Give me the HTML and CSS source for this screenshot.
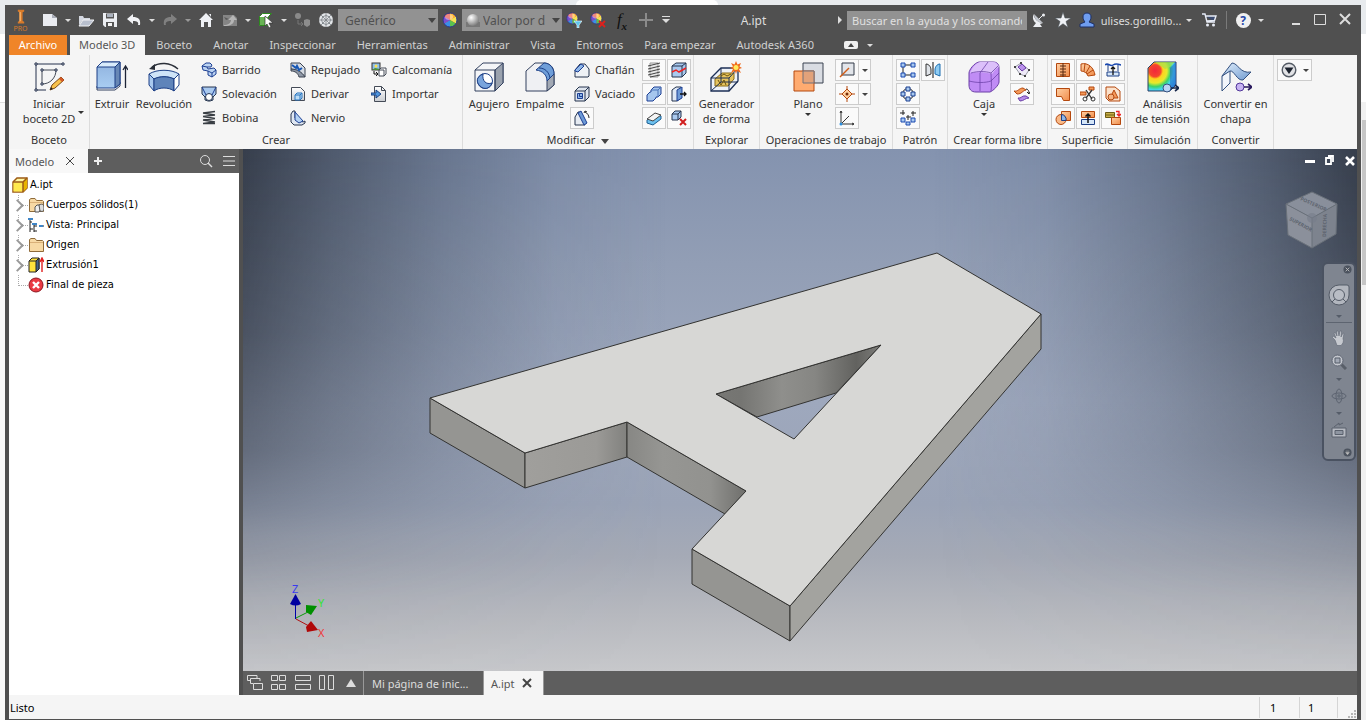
FILE: index.html
```html
<!DOCTYPE html>
<html lang="es">
<head>
<meta charset="utf-8">
<title>A.ipt</title>
<link rel="stylesheet" href="styles.css">
</head>
<body>
<svg class="defs" aria-hidden="true">
  <defs>
    <linearGradient id="gBlue" x1="0" y1="0" x2="1" y2="1"><stop offset="0" stop-color="#e2f0fc"/><stop offset="1" stop-color="#6f9ad0"/></linearGradient>
    <linearGradient id="gBlueV" x1="0" y1="0" x2="0" y2="1"><stop offset="0" stop-color="#8fb2de"/><stop offset="1" stop-color="#a9cdf2"/></linearGradient>
    <linearGradient id="gGrey" x1="0" y1="0" x2="0" y2="1"><stop offset="0" stop-color="#fff"/><stop offset="1" stop-color="#c9ccd1"/></linearGradient>
    <linearGradient id="gOr" x1="0" y1="0" x2="1" y2="1"><stop offset="0" stop-color="#ffd0a4"/><stop offset="1" stop-color="#f08c4a"/></linearGradient>
    <radialGradient id="gBall" cx=".35" cy=".3" r=".8"><stop offset="0" stop-color="#fff"/><stop offset="1" stop-color="#6d6d6d"/></radialGradient>
    <radialGradient id="gHeat" cx=".25" cy=".3" r=".95"><stop offset="0" stop-color="#f2283c"/><stop offset=".22" stop-color="#f5452d"/><stop offset=".3" stop-color="#ffd21f"/><stop offset=".45" stop-color="#e6ea2c"/><stop offset=".58" stop-color="#3cd36a"/><stop offset=".7" stop-color="#41d8f0"/><stop offset="1" stop-color="#2f86f0"/></radialGradient>
    <linearGradient id="gF2"><stop offset="0" stop-color="#a09f9c"/><stop offset=".7" stop-color="#9b9a97"/><stop offset="1" stop-color="#81817e"/></linearGradient>
    <linearGradient id="gF3"><stop offset="0" stop-color="#878784"/><stop offset=".3" stop-color="#969693"/><stop offset=".7" stop-color="#92928f"/><stop offset="1" stop-color="#6f6f6c"/></linearGradient>
    <linearGradient id="gHole"><stop offset="0" stop-color="#777774"/><stop offset=".15" stop-color="#757572"/><stop offset=".4" stop-color="#8f8f8c"/><stop offset=".6" stop-color="#868683"/><stop offset=".85" stop-color="#62625f"/><stop offset="1" stop-color="#7d7d7a"/></linearGradient>
    <g id="wheel"><circle cx="8" cy="8" r="7" fill="#e33a2e"/><path d="M8 8V1a7 7 0 0 1 6 3.500z" fill="#ffb42e"/><path d="M8 8l6-3.500a7 7 0 0 1 0 7z" fill="#f3e552"/><path d="M8 8l6 3.500A7 7 0 0 1 8 15z" fill="#5cc24e"/><path d="M8 8v7a7 7 0 0 1-6-3.500z" fill="#3b8ee6"/><path d="M8 8l-6 3.500a7 7 0 0 1 0-7z" fill="#7a4fd0"/><circle cx="8" cy="8" r="7" fill="none" stroke="#223a8c"/><ellipse cx="7" cy="5" rx="4" ry="3" fill="#fff" opacity=".4"/></g>
    <g id="folder"><path d="M1.500 14.500v-12l1.500-1h4l1.500 2h6l1 1v10z" fill="#f7d9a4" stroke="#8f6b3a"/><path d="M2 5.500h13" stroke="#d9b078"/></g>
  </defs>
</svg>

<div class="backdrop-top"><span class="backdrop-tab"></span></div>
<div class="desk">
<div class="backdrop-left"></div>
<div class="app">

<header class="titlebar">
  <button class="logo" aria-label="Inventor"><svg viewBox="0 0 14 20"><path d="M3 1h8v2l-2 1v11l2 1v2H3v-2l2-1V4L3 3z" fill="#d87a2a"/><path d="M5 3l2 1v11l-2 1z" fill="#f6ad62"/></svg><span class="logo-text">PRO</span></button>
  <button class="tb" aria-label="Nuevo"><svg viewBox="0 0 16 16"><path d="M1 2h9l5 4v8H1z" fill="#e9ebf0"/><path d="M10 2v4h5z" fill="#a9adb8"/></svg></button>
  <button class="tb-arrow" aria-label="Opciones de nuevo"></button>
  <button class="tb" aria-label="Abrir"><svg viewBox="0 0 16 16"><path d="M1 13V4h4l1 2h6v2H5z" fill="#d3d7e0"/><path d="M1 14l4-6h11l-5 6z" fill="#b8bfcd" stroke="#f1f2f5"/></svg></button>
  <button class="tb" aria-label="Guardar"><svg viewBox="0 0 16 16"><path d="M1 1h14v14H3l-2-2z" fill="#eceef2"/><path d="M4 1.500h8v5H4zM4 10h8v5H4z" fill="#555"/><path d="M5 2h6v3H5z" fill="#aab1bd"/><path d="M6 11h4v3H6z" fill="#f5f5f5"/></svg></button>
  <button class="tb" aria-label="Deshacer"><svg viewBox="0 0 16 16"><path d="M1 7l6-5v3c5 0 8 2 7 8h-2c1-3-1-4-5-4v3z" fill="#f1f2f5"/></svg></button>
  <button class="tb-arrow" aria-label="Lista de deshacer"></button>
  <button class="tb" aria-label="Rehacer"><svg viewBox="0 0 16 16"><path d="M15 7L9 2v3C4 5 1 7 2 13h2c-1-3 1-4 5-4v3z" fill="#808080"/></svg></button>
  <button class="tb-arrow dim" aria-label="Lista de rehacer"></button>
  <button class="tb" aria-label="Inicio"><svg viewBox="0 0 16 16"><path d="M8 1l7 7h-2v7h-3v-5H6v5H3V8H1z" fill="#eef0f4"/><path d="M11 2h2v3z" fill="#eef0f4"/></svg></button>
  <button class="tb" aria-label="Actualizar"><svg viewBox="0 0 16 16"><path d="M1 3h11l3 3v8H1z" fill="#858585"/><path d="M2 13c4 0 7-2 7-5H6l5-5 4 5h-3c0 4-4 6-10 6z" fill="#b5b5b5"/><path d="M2 5l5 2-3 1z" fill="#5a5a5a"/></svg></button>
  <button class="tb-arrow" aria-label="Opciones de actualizar"></button>
  <button class="tb" aria-label="Seleccionar"><svg viewBox="0 0 16 16"><path d="M1.500 4.500l3-3h9l-3 3v9h-9z" fill="#fff" stroke="#2d8a1e"/><path d="M2 5h8v8H2z" fill="#69b355"/><path d="M7 4l8 7h-4l2 4-2 1-2-4-2 2z" fill="#fff" stroke="#333" stroke-width=".7"/></svg></button>
  <button class="tb-arrow" aria-label="Filtro de selección"></button>
  <button class="tb" aria-label="Componente"><svg viewBox="0 0 16 16"><circle cx="4" cy="4" r="3" fill="#8a8a8a"/><path d="M10 8l3-1 3 1v5l-3 2-3-2z" fill="#8d8d8d"/><path d="M4 8v4h4M7 10l2 2-2 2" fill="none" stroke="#777"/></svg></button>
  <button class="tb" aria-label="Material"><svg viewBox="0 0 16 16"><circle cx="8" cy="8" r="7" fill="#e4e7ea"/><path d="M3 3l10 10M1 8h14M8 1v14M13 3L3 13M4 5q4-3 8 0M4 11q4 3 8 0M5 4q-3 4 0 8M11 4q3 4 0 8" stroke="#7b8186" stroke-width=".8" fill="none"/></svg></button>
  <div class="picker"><select aria-label="Material"><option>Genérico</option></select></div>
  <button class="tb" aria-label="Aspecto"><svg viewBox="0 0 16 16"><use href="#wheel"/></svg></button>
  <div class="picker with-ball"><svg class="ball" width="14" height="14" viewBox="0 0 14 14"><path d="M0 9h14v5H0z" fill="#777"/><circle cx="7" cy="7" r="6" fill="url(#gBall)"/></svg><select aria-label="Aspecto"><option>Valor por d</option></select></div>
  <button class="tb" aria-label="Ajustar"><svg viewBox="0 0 16 16"><g transform="scale(.8)"><use href="#wheel"/></g><path d="M8 9h8l-3 4v3h-2v-3z" fill="#5dc6ee" stroke="#fff" stroke-width=".6"/></svg></button>
  <button class="tb" aria-label="Borrar"><svg viewBox="0 0 16 16"><g transform="scale(.8)"><use href="#wheel"/></g><path d="M9 9l6 6M15 9l-6 6" stroke="#e0201c" stroke-width="1.800"/></svg></button>
  <button class="tb fx" aria-label="Parámetros">f<sub>x</sub></button>
  <button class="tb" aria-label="Añadir"><svg viewBox="0 0 16 16"><path d="M7 1h2v6h6v2H9v6H7V9H1V7h6z" fill="#8b8b8b"/></svg></button>
  <button class="tb slim" aria-label="Personalizar"><svg viewBox="0 0 16 16"><path d="M4 4.500h8" stroke="#ddd"/><path d="M4 7h8l-4 4z" fill="#ddd"/></svg></button>
  <h1 class="doc-title">A.ipt</h1>
  <button class="tb-right" aria-label="Ocultar búsqueda"></button>
  <input class="search" type="text" aria-label="Buscar" value="Buscar en la ayuda y los comandos">
  <button class="tb" aria-label="Comunicaciones"><svg viewBox="0 0 16 16"><path d="M3 2c0 5 3 8 9 9l-3 1 2 3H2l3-4C2 9 1 5 3 2z" fill="#eceef2"/><path d="M3 2l9 9c-5 0-9-4-9-9z" fill="#c3c7ce"/><path d="M8 7l4-4" stroke="#eceef2"/><circle cx="12.500" cy="3" r="1.500" fill="#eceef2"/></svg></button>
  <button class="tb" aria-label="Favoritos"><svg viewBox="0 0 16 16"><path d="M8 0l2 6h6l-5 3.500 2 6-5-3.700-5 3.700 2-6L0 6h6z" fill="#f0f2f6" stroke="#4a5058" stroke-width=".6"/></svg></button>
  <button class="tb" aria-label="Cuenta"><svg viewBox="0 0 16 16"><path d="M8 1c3 0 4 2 4 4s-1 4-2 5l5 2v3H1v-3l5-2C5 9 4 7 4 5s1-4 4-4z" fill="#6f9df0" stroke="#1c2f66"/></svg></button>
  <button class="user">ulises.gordillo...</button>
  <button class="tb-arrow" aria-label="Menú de usuario"></button>
  <button class="tb cart" aria-label="Tienda"><svg viewBox="0 0 16 16"><path d="M1 2h3l2 8h8M4.500 4H15l-1.500 4.500L6 9" fill="#3d4d72" stroke="#e8ecf5" stroke-width="1.400"/><circle cx="6.500" cy="13" r="1.500" fill="#e8ecf5"/><circle cx="12.500" cy="13" r="1.500" fill="#e8ecf5"/></svg></button>
  <span class="tb-sep"></span>
  <button class="tb help" aria-label="Ayuda"><span>?</span></button>
  <button class="tb-arrow" aria-label="Menú de ayuda"></button>
  <div class="window-buttons">
    <button class="tb" aria-label="Minimizar"><svg viewBox="0 0 16 16"><path d="M3 12h8" stroke="#ddd" stroke-width="2"/></svg></button>
    <button class="tb" aria-label="Maximizar"><svg viewBox="0 0 16 16"><path d="M1.500 2.500h11v10h-11z" fill="none" stroke="#ddd"/></svg></button>
    <button class="tb" aria-label="Cerrar"><svg viewBox="0 0 16 16"><path d="M3 2l10 10M13 2L3 12" stroke="#ddd" stroke-width="2"/></svg></button>
  </div>
</header>

<nav class="tabs">
  <button class="tab file">Archivo</button>
  <button class="tab active">Modelo 3D</button>
  <button class="tab">Boceto</button>
  <button class="tab">Anotar</button>
  <button class="tab">Inspeccionar</button>
  <button class="tab">Herramientas</button>
  <button class="tab">Administrar</button>
  <button class="tab">Vista</button>
  <button class="tab">Entornos</button>
  <button class="tab">Para empezar</button>
  <button class="tab">Autodesk A360</button>
  <button class="tb collapse" aria-label="Minimizar cinta"><svg viewBox="0 0 16 16"><rect x="1" y="4" width="14" height="8" rx="2" fill="#f0f0f0"/><path d="M5 10h6L8 6z" fill="#444"/></svg></button>
  <button class="tb-arrow" aria-label="Opciones de cinta"></button>
</nav>

<section class="ribbon">
  <div class="panel p-sketch">
    <div class="tools">
      <button class="big drop-side"><svg viewBox="0 0 32 32"><path d="M3 4v25h10M3 3h27" fill="none" stroke="#24304d"/><path d="M9 9h14M9 9v14M9 23C17 23 23 17 23 9" fill="none" stroke="#444b57"/><g fill="#fff" stroke="#24304d"><path d="M2 2h2v2H2zM29 2h2v2h-2zM2 28h2v2H2zM8 8h2v2H8zM22 8h2v2h-2zM8 22h2v2H8z"/></g><path d="M17 29l2-5 9-8 3 3-9 8z" fill="#f8c24c" stroke="#7b4a18"/><path d="M26 18l2-2 3 3-2 2z" fill="#d65a28"/><path d="M17 29l1-3 2 2z" fill="#222"/></svg><span>Iniciar<br>boceto 2D</span></button>
    </div>
    <div class="panel-name">Boceto</div>
  </div>

  <div class="panel p-create">
    <div class="tools">
      <button class="big w-36"><svg viewBox="0 0 32 32"><path d="M1 25v4h18l5-4v-4z" fill="#fff" stroke="#33415f"/><path d="M1 6l5-5h18v22l-5 4H1z" fill="url(#gBlueV)" stroke="#1c3f86"/><path d="M1 6l5-5h18l-5 5z" fill="#d8ebfb" stroke="#1c3f86"/><path d="M19 6l5-5v22l-5 4z" fill="#6787b5" stroke="#1c3f86"/><path d="M29.500 27V6M27 9l2.500-4L32 9" fill="none" stroke="#1d2436" stroke-width="1.300"/></svg><span>Extruir</span></button>
      <button class="big w-68"><svg viewBox="0 0 32 32"><path d="M4 6C11 1 22 1 30 8" fill="none" stroke="#2a2f38" stroke-width="1.400"/><path d="M1 8l6-5v6z" fill="#2a2f38"/><path d="M1 13l5 5v12l-5-6z" fill="#a9c9ef" stroke="#1c3f86"/><path d="M1 13C9 8 23 8 31 13l-5 5c-6-3-14-3-20 0z" fill="#cfe4f8" stroke="#1c3f86"/><path d="M6 18v12c5-4 15-4 20 0V18c-6-3-14-3-20 0z" fill="#5f84ba" stroke="#1c3f86"/><path d="M26 18l5-5v11l-5 6z" fill="#fff" stroke="#1c3f86"/></svg><span>Revolución</span></button>
      <div class="list col-a">
        <button class="cmd"><svg viewBox="0 0 16 16"><path d="M1 4l4-3h4l2 2-1 2-4 0 1 2 6-1 2 2v4l-4 3-4-2V9L2 8z" fill="#bcd4f2" stroke="#1d3f93"/><path d="M7 9l4 2v4M11 11l4-3M1 4l5 1" fill="none" stroke="#1d3f93"/></svg>Barrido</button>
        <button class="cmd"><svg viewBox="0 0 16 16"><path d="M1 1h14v7l-3 3v3l-3 1H7l-3-1v-3L1 8z" fill="#a9c9ef" stroke="#26354f"/><circle cx="8" cy="11" r="3.500" fill="#fff" stroke="#26354f"/><path d="M1 1l4 8M15 1l-4 8" stroke="#1d3f93"/></svg>Solevación</button>
        <button class="cmd"><svg viewBox="0 0 16 16"><path d="M2 3l12-1.500M2 3l12 2M2 6.500L14 5M2 6.500l12 2M2 10l12-1.500M2 10l12 2M2 13.500L14 12M2 13.500h12" fill="none" stroke="#393e44" stroke-width="1.400"/></svg>Bobina</button>
      </div>
      <div class="list col-b">
        <button class="cmd"><svg viewBox="0 0 16 16"><path d="M1 1h9l5 5v9c-3-4-8-7-14-8z" fill="#d6dbe2" stroke="#3a4250"/><path d="M1 7c6 0 11 3 14 8H9C8 11 5 9 1 9z" fill="#8f98a6" stroke="#3a4250"/><path d="M2 3l4 3 1-2 2 4 3-2" fill="none" stroke="#1757b5" stroke-width="2"/></svg>Repujado</button>
        <button class="cmd"><svg viewBox="0 0 16 16"><path d="M1.500 14.500v-13h9l4 4v9z" fill="url(#gGrey)" stroke="#444b57"/><path d="M5 9l2-2h5v5l-2 2H5z" fill="#bcdcf6" stroke="#2a76c0"/><path d="M5 9h5v5M10 9l2-2" fill="none" stroke="#2a76c0"/></svg>Derivar</button>
        <button class="cmd"><svg viewBox="0 0 16 16"><path d="M1 4l2-3h2v7l8 4 2-1v2l-3 2H4l-3-3z" fill="#dfe7f2" stroke="#26354f"/><path d="M5 2l8 9-4 2-4-3z" fill="#b3d2f4" stroke="#1d3f93"/></svg>Nervio</button>
      </div>
      <div class="list">
        <button class="cmd"><svg viewBox="0 0 16 16"><rect x="1" y="1" width="8" height="7" fill="#8fc1ea" stroke="#333"/><circle cx="5" cy="4" r="1.500" fill="#ffe14a"/><path d="M1 8l3-2 5 1v1z" fill="#4f8e3a"/><path d="M8 8l2-2h5v6l-2 2H8z" fill="#fff" stroke="#444b57"/><path d="M8 8h5v6" fill="none" stroke="#444b57"/><path d="M3 9v3h3M5 10l2 2-2 2" fill="none" stroke="#111"/></svg>Calcomanía</button>
        <button class="cmd"><svg viewBox="0 0 16 16"><path d="M3.500 15.500V.5h7l4 4v11z" fill="url(#gGrey)" stroke="#444b57"/><path d="M10.500.5v4h4" fill="none" stroke="#444b57"/><path d="M0 7h5V4l5 4-5 4V9H0z" fill="#4f95dc" stroke="#173f80"/></svg>Importar</button>
      </div>
    </div>
    <div class="panel-name">Crear</div>
  </div>

  <div class="panel p-modify">
    <div class="tools">
      <button class="big w-48"><svg viewBox="0 0 32 32"><path d="M2 9l8-7h20v20l-8 8H2z" fill="#f4f5f7" stroke="#33415f"/><path d="M22 9l8-7v20l-8 8z" fill="#9aa2ae" stroke="#33415f"/><path d="M2 9h20v21" fill="none" stroke="#33415f"/><circle cx="12" cy="20" r="7.500" fill="#fff" stroke="#1c3f86"/><path d="M10 13c-1 7 3 11 9 9-2 6-8 7-12 3s-4-9 3-12z" fill="#79a4dc" stroke="#1c3f86"/></svg><span>Agujero</span></button>
      <button class="big w-54"><svg viewBox="0 0 32 32"><path d="M2 10l9-8h10c6 1 9 5 9 11v11l-7 6H2z" fill="#eff0f3" stroke="#33415f"/><path d="M23 20l7-7v11l-7 6z" fill="#a2a9b4" stroke="#33415f"/><path d="M12 9l8-7c6 0 10 5 10 11l-7 7c0-6-4-10-11-11z" fill="#6f9ed8" stroke="#1c3f86"/><path d="M15 7c6 0 10 4 11 10" fill="none" stroke="#1c3f86"/></svg><span>Empalme</span></button>
      <div class="list col-d">
        <button class="cmd inset"><svg viewBox="0 0 16 16"><path d="M1 8l5-6h5l4 5v7l-1 1H1z" fill="#eef1f5" stroke="#26354f"/><path d="M1 8l6-6 3 2-6 6-3-1z" fill="#8fb7e8" stroke="#1d3f93"/></svg>Chaflán</button>
        <button class="cmd inset"><svg viewBox="0 0 16 16"><path d="M1 5l4-4h10v10l-4 4H1z" fill="#dfe5ee" stroke="#26354f"/><path d="M1 5h10v10M11 5l4-4" fill="none" stroke="#26354f"/><path d="M3.500 7.500h5v5h-5z" fill="#8fb7e8" stroke="#1d3f93"/><path d="M5.500 7.500v3h3" fill="none" stroke="#1d3f93"/></svg>Vaciado</button>
        <button class="sq" aria-label="Ángulo de desmoldeo"><svg viewBox="0 0 16 16"><path d="M1 7l3-5h3l4 13H1z" fill="#e6ebf2" stroke="#26354f"/><path d="M4 3l3-2 6 12-3 2z" fill="#6d9ad6" stroke="#1d3f93"/><path d="M11 2c2 1 4 3 4 6M10 3l1-2 2 1" fill="none" stroke="#222"/></svg></button>
      </div>
      <div class="grid g2">
        <button class="sq" aria-label="Rosca"><svg viewBox="0 0 16 16"><path d="M4 1h8v14H4z" fill="#e8e8e8" stroke="#999"/><path d="M2 4l12-3M2 7l12-3M2 10l12-3M2 13l12-3M4 15l10-2" stroke="#444"/></svg></button>
        <button class="sq" aria-label="Dividir"><svg viewBox="0 0 16 16"><path d="M1 4l4-3h10v10l-4 4H1z" fill="#a9c9ef" stroke="#26354f"/><path d="M1 4h10l4-3M11 4v11" fill="none" stroke="#26354f"/><path d="M1 10l4-2 3 2 7-4" fill="none" stroke="#e22" stroke-width="1.500"/></svg></button>
        <button class="sq" aria-label="Combinar"><svg viewBox="0 0 16 16"><path d="M5 4l3-3h7v7l-3 3h-2v1l-3 3H1V9l3-3h1z" fill="#a5c6ee" stroke="#1d3f93"/><path d="M5 4h7v7M12 4l3-3" fill="none" stroke="#4a74b8"/></svg></button>
        <button class="sq" aria-label="Mover cara"><svg viewBox="0 0 16 16"><path d="M1 4l4-3h5v11l-4 3H1z" fill="#dfe9f5" stroke="#26354f"/><path d="M6 4l5-3v11l-5 3z" fill="#6d9ad6" stroke="#1d3f93"/><path d="M9 8h6M13 6l2 2-2 2" fill="none" stroke="#111" stroke-width="1.300"/></svg></button>
        <button class="sq" aria-label="Engrosar"><svg viewBox="0 0 16 16"><path d="M1 10l8-6 6 2v3l-8 6-6-2z" fill="#6cc0ee" stroke="#1d5f93"/><path d="M1 9l8-6 6 2-8 6z" fill="#f5f5f5" stroke="#444"/></svg></button>
        <button class="sq" aria-label="Suprimir cara"><svg viewBox="0 0 16 16"><path d="M1 4l3-3h6v6l-3 3H1z" fill="#a9c9ef" stroke="#26354f"/><path d="M1 4h6v6M7 4l3-3" fill="none" stroke="#26354f"/><path d="M9 9l6 6M15 9l-6 6" stroke="#d11f1f" stroke-width="2"/></svg></button>
      </div>
    </div>
    <div class="panel-name menu">Modificar</div>
  </div>

  <div class="panel p-explore">
    <div class="tools center">
      <button class="big"><svg viewBox="0 0 32 32"><path d="M1 17L11 7h17v13L19 30H1z" fill="#eef2f8" stroke="#1c2f55" stroke-width="1.300"/><path d="M5 18l7-6h12v6l-6 7H5z" fill="#e6c45e" stroke="#8a6a14"/><path d="M1 17h18v13M19 17l9-10M1 30l10-9h17M11 7v14" fill="none" stroke="#1c2f55"/><path d="M8 19l3 5 3-5 2 5M11 15l3-2 3 2 4-2" fill="none" stroke="#6d5410"/><path d="M26 0l1.500 3.500L31 2l-1.500 3.500L32 7l-3 1 2 4-4-2-1 3-1-3-4 2 2-4-3-1 3-1.500L21 2l3.500 1.500z" fill="#f06a1c"/><circle cx="26" cy="6.500" r="2.500" fill="#ffe95a"/></svg><span>Generador<br>de forma</span></button>
    </div>
    <div class="panel-name">Explorar</div>
  </div>

  <div class="panel p-work">
    <div class="tools">
      <button class="big w-50 drop"><svg viewBox="0 0 32 32"><path d="M11 2h20v20H11z" fill="#d9dce2" stroke="#3a4250"/><path d="M2 10h20v20H2z" fill="#ffab70" stroke="#b4480e"/><path d="M11 10h11v12H11z" fill="#e2a27a" stroke="#70707a"/></svg><span>Plano</span></button>
      <div class="grid g1">
        <div class="split"><button class="sq" aria-label="Eje"><svg viewBox="0 0 16 16"><path d="M3 1h12v12H3z" fill="#e2e5ea" stroke="#333b48"/><path d="M1 15l9-9" stroke="#d05c17" stroke-width="1.500"/></svg></button><button class="sq-arrow" aria-label="Tipos de eje"></button></div>
        <div class="split"><button class="sq" aria-label="Punto"><svg viewBox="0 0 16 16"><path d="M8 3l5 5-5 5-5-5z" fill="#ffd0a0" stroke="#b4480e"/><path d="M8 0v4M8 12v4M0 8h4M12 8h4" stroke="#b4480e"/><circle cx="8" cy="8" r="1.500" fill="#7a2c05"/></svg></button><button class="sq-arrow" aria-label="Tipos de punto"></button></div>
        <button class="sq" aria-label="SCU"><svg viewBox="0 0 16 16"><path d="M2 14V1M2 14h13M2 14l8-8M1 3l1-2 1 2M13 13l2 1-2 1" fill="none" stroke="#333"/><circle cx="2" cy="14" r="1.500" fill="#2b8fe0"/></svg></button>
      </div>
    </div>
    <div class="panel-name">Operaciones de trabajo</div>
  </div>

  <div class="panel p-pattern">
    <div class="tools">
      <div class="grid g2">
        <button class="sq" aria-label="Rectangular"><svg viewBox="0 0 16 16"><path d="M3 3h10M3 3v10M5 13h8" stroke="#222" fill="none"/><g fill="#a9c9ef" stroke="#1a48b0"><path d="M1 1h4v4H1zM11 1h4v4h-4zM1 11h4v4H1zM11 11h4v4h-4z"/></g></svg></button>
        <button class="sq" aria-label="Simetría"><svg viewBox="0 0 16 16"><path d="M1 2c3 0 5 3 5 6v4l-5 2z" fill="#dfe3e8" stroke="#333"/><path d="M15 2c-3 0-5 3-5 6v4l5 2z" fill="#8ecbf2" stroke="#1a6db0"/><path d="M8 0v16" stroke="#111"/></svg></button>
        <button class="sq" aria-label="Circular"><svg viewBox="0 0 16 16"><circle cx="8" cy="8" r="5.500" fill="none" stroke="#222"/><g fill="#a9c9ef" stroke="#1a3f90"><path d="M6 1h4v4H6zM1 6h4v4H1zM11 6h4v4h-4zM6 11h4v4H6z"/></g></svg></button>
        <span></span>
        <button class="sq" aria-label="Por boceto"><svg viewBox="0 0 16 16"><path d="M3 0v5M0 3h5M8 5v5M6 7h5M13 1v5M11 3h5" stroke="#222"/><g fill="#a9c9ef" stroke="#1a48b0"><path d="M1 8h4v4H1zM11 8h4v4h-4zM6 12h4v3H6z"/></g></svg></button>
      </div>
    </div>
    <div class="panel-name">Patrón</div>
  </div>

  <div class="panel p-free">
    <div class="tools">
      <button class="big w-48 drop"><svg viewBox="0 0 32 32"><path d="M1 12c0-3 5-10 10-11h14c4 0 6 2 6 6v14c0 3-6 9-9 10H8c-5 0-7-3-7-7z" fill="#c08cf5" stroke="#6a3fa6"/><path d="M2 12c1-3 5-10 10-11h13c3 0 5 2 6 5-3 1-6 6-7 7-7-2-15-2-22-1z" fill="#dcc0fa"/><path d="M1 20c8 2 16 2 22 0M23 20l8-8M12 12v18M12 12l8-11M3 12c7-2 14-2 20 0 0 6 1 12 0 18M23 12l7-7" fill="none" stroke="#6a3fa6" stroke-opacity=".75"/></svg><span>Caja</span></button>
      <div class="grid g1">
        <button class="sq" aria-label="Convertir"><svg viewBox="0 0 16 16"><path d="M1 5l6-4 8 7-4 6-5-2z" fill="#efeaf8" stroke="#9a9da8"/><path d="M4 5l4-3 4 4-4 3z" fill="#bb92ec" stroke="#6a3fa6"/><g fill="#444"><path d="M0 4h2v2H0zM6 0h2v2H6zM14 7h2v2h-2zM10 13h2v2h-2zM5 11h2v2H5z"/></g></svg></button>
        <button class="sq" aria-label="Cara"><svg viewBox="0 0 16 16"><path d="M0 5c4 1 5-3 9-3l3 2c-4 1-4 4-9 4z" fill="#f59a5a" stroke="#b4480e"/><path d="M4 12c3 1 4-3 8-2l3 2c-4 0-5 3-9 3z" fill="#b68be8" stroke="#6a3fa6"/><path d="M12 3c2 0 3 2 3 4M13 6l2 2 1-2" fill="none" stroke="#222"/></svg></button>
      </div>
    </div>
    <div class="panel-name">Crear forma libre</div>
  </div>

  <div class="panel p-surface">
    <div class="tools">
      <div class="grid g3">
        <button class="sq" aria-label="Coser"><svg viewBox="0 0 16 16"><path d="M1.500 1.500h13v13h-13z" fill="url(#gOr)" stroke="#b4480e"/><path d="M8 1v14M5 4h6M5 7h6M5 10h6M5 13h6" stroke="#5a2a10"/></svg></button>
        <button class="sq" aria-label="Superficie reglada"><svg viewBox="0 0 16 16"><path d="M1 2c7-2 13 4 14 11l-7 1C7 11 4 9 1 9z" fill="url(#gOr)" stroke="#b4480e"/><path d="M5 1.500l-1 8M10 4L6 11M13 8l-6 4" stroke="#b4480e"/></svg></button>
        <button class="sq" aria-label="Parche"><svg viewBox="0 0 16 16"><path d="M0 3c3-3 5 2 8 0s5-1 8 0" fill="none" stroke="#1a48b0" stroke-width="1.500"/><path d="M2 10h12v4H2zM3 3v6M13 3v6" fill="#d5e6f8" stroke="#1c3f86"/><path d="M8 13V5M6 7l2-2 2 2" fill="none" stroke="#111" stroke-width="1.300"/></svg></button>
        <button class="sq" aria-label="Contorno"><svg viewBox="0 0 16 16"><path d="M1.500 2.500h13v12h-6l-2-4h-5z" fill="url(#gOr)" stroke="#b4480e"/></svg></button>
        <button class="sq" aria-label="Recortar"><svg viewBox="0 0 16 16"><path d="M0 6h6v3H0zM9 1h5v3H9z" fill="#f59a5a" stroke="#b4480e"/><path d="M6 4l6 9M12 4L6 12" stroke="#333" stroke-width="1.300"/><circle cx="5" cy="13" r="2" fill="none" stroke="#333"/><circle cx="13" cy="13" r="2" fill="none" stroke="#333"/></svg></button>
        <button class="sq" aria-label="Alargar"><svg viewBox="0 0 16 16"><path d="M1 1h9l5 4v10H4l-3-3z" fill="#fbe2cc" stroke="#b4480e"/><path d="M5 12l4-8 4 8z" fill="#f59a5a" stroke="#b4480e"/><circle cx="6" cy="11" r="3" fill="#f7b482" stroke="#b4480e"/></svg></button>
        <button class="sq" aria-label="Sustituir cara"><svg viewBox="0 0 16 16"><path d="M6.500 1.500h9v9h-9z" fill="url(#gOr)" stroke="#b4480e"/><circle cx="6" cy="9.500" r="5" fill="#f9b987" stroke="#b4480e"/><path d="M6.500 4.500a5 5 0 0 1 4.500 6h-4.500z" fill="#8fb7e8" stroke="#1c3f86"/></svg></button>
        <button class="sq" aria-label="Reparar"><svg viewBox="0 0 16 16"><path d="M1.500 1.500h13v6h-13z" fill="url(#gOr)" stroke="#b4480e"/><path d="M1.500 9.500h13v5h-13z" fill="#d5e6f8" stroke="#1c3f86"/><path d="M8 13V4M5.500 6.500L8 4l2.500 2.500" fill="none" stroke="#111" stroke-width="1.500"/></svg></button>
        <button class="sq" aria-label="Ajustar malla"><svg viewBox="0 0 16 16"><path d="M.5 2.500h9v5h-9z" fill="#c9b04a" stroke="#6d5c14"/><path d="M1 5h8" stroke="#6d5c14"/><path d="M6.500 7.500h9v7h-9z" fill="url(#gOr)" stroke="#b4480e"/><path d="M11 1.500h3v4M12 4l2 2 2-2" fill="none" stroke="#e22" stroke-width="1.300"/></svg></button>
      </div>
    </div>
    <div class="panel-name">Superficie</div>
  </div>

  <div class="panel p-sim">
    <div class="tools center">
      <button class="big"><svg viewBox="0 0 32 32"><path d="M1 7l6-6h22v23l-6 6H1z" fill="url(#gHeat)" stroke="#2c3e66"/><path d="M23 7l6-6v23l-6 6z" fill="#2865c8" opacity=".55"/><path d="M8 1h20l-5 5-5 2z" fill="#a9e04a" opacity=".7"/><circle cx="20" cy="27" r="4" fill="#b9d5f5" stroke="#33507f"/><path d="M24 27h7M28 24l4 3-4 3" fill="none" stroke="#17264a" stroke-width="1.600"/></svg><span>Análisis<br>de tensión</span></button>
    </div>
    <div class="panel-name">Simulación</div>
  </div>

  <div class="panel p-convert">
    <div class="tools center">
      <button class="big"><svg viewBox="0 0 32 32"><path d="M2 15l8-6v13l-8 8z" fill="#f2f5fa" stroke="#33507f"/><path d="M2 15L12 2c6 0 8 11 19 9l-8 8c-6 1-9-10-13-9z" fill="url(#gBlue)" stroke="#33507f"/><circle cx="20" cy="26" r="4" fill="#c7b3f2" stroke="#52379a"/><path d="M24 26h7M28 23l4 3-4 3" fill="none" stroke="#2a1a5e" stroke-width="1.600"/></svg><span>Convertir en<br>chapa</span></button>
    </div>
    <div class="panel-name">Convertir</div>
  </div>

  <div class="panel p-more">
    <div class="tools">
      <button class="more" aria-label="Más paneles"><svg viewBox="0 0 16 16"><circle cx="8" cy="8" r="6.800" fill="#e2e3e6" stroke="#555c66" stroke-width="1.400"/><path d="M3.500 5.500h9L8 12z" fill="#1c232e"/></svg><span class="caret"></span></button>
    </div>
  </div>
</section>

<main class="work">
  <aside class="browser">
    <div class="browser-head">
      <button class="browser-tab">Modelo<svg width="10" height="10" viewBox="0 0 10 10"><path d="M1 1l8 8M9 1L1 9" stroke="#444"/></svg></button>
      <button class="head-btn" aria-label="Añadir panel"><svg viewBox="0 0 16 16"><path d="M7 4v8M3 8h8" stroke="#eee" stroke-width="2"/></svg></button>
      <button class="head-btn push" aria-label="Buscar en el modelo"><svg viewBox="0 0 16 16"><circle cx="7" cy="7" r="4.500" fill="none" stroke="#ddd"/><path d="M10 10l4 4" stroke="#ddd" stroke-width="1.400"/></svg></button>
      <button class="head-btn" aria-label="Menú"><svg viewBox="0 0 16 16"><path d="M3 3.500h12M3 8h12M3 12.500h12" stroke="#ddd"/></svg></button>
    </div>
    <ul class="tree">
      <li class="root"><svg viewBox="0 0 16 16"><path d="M1 5l4-4h10v10l-4 4H1z" fill="#fff6a0" stroke="#9c5a14" stroke-width="1.500"/><path d="M1.500 5.500h9v9h-9z" fill="#ffe94d"/><path d="M11 5l4-4v10l-4 4z" fill="#e8b400"/><path d="M1 5h10v10M11 5l4-4" fill="none" stroke="#9c5a14" stroke-width="1.500"/></svg>A.ipt</li>
      <li class="node"><svg viewBox="0 0 16 16"><use href="#folder"/><path d="M7 10l2-2h4v4l-2 3H7z" fill="#eee" stroke="#555"/><path d="M11 8c4-2 5 0 5 3s-1 4-4 3z" fill="#ddd" stroke="#555"/></svg>Cuerpos sólidos(1)</li>
      <li class="node"><svg viewBox="0 0 16 16"><path d="M2 3v12M2 5h2M2 12h3M6 7v8M6 9h3M6 14h3M11 9h5" stroke="#222" fill="none"/><path d="M0 1h5v2H0zM4 6h5v2H4z" fill="#3f86c8"/><path d="M11 8h4v2h-4z" fill="#3f86c8"/></svg>Vista: Principal</li>
      <li class="node"><svg viewBox="0 0 16 16"><use href="#folder"/></svg>Origen</li>
      <li class="node"><svg viewBox="0 0 16 16"><path d="M1 4l3-3h7v11l-3 3H1z" fill="#ffe23c" stroke="#222"/><path d="M8 4l3-3v11l-3 3z" fill="#46648c" stroke="#222"/><path d="M1 4h7" stroke="#222"/><path d="M14 15V2M12 5l2-4 2 4" fill="none" stroke="#e02020" stroke-width="1.400"/></svg>Extrusión1</li>
      <li class="node last"><svg viewBox="0 0 16 16"><circle cx="8" cy="8" r="7" fill="#ea3b43" stroke="#8e1620"/><path d="M5 5l6 6M11 5l-6 6" stroke="#fff" stroke-width="2.400"/></svg>Final de pieza</li>
    </ul>
  </aside>

  <div class="stage-col">
    <div class="stage">
      <svg class="model" viewBox="243 149 1114 522" role="img" aria-label="Pieza con forma de A">
        <g stroke="#333331" stroke-width="1" stroke-linejoin="round">
          <path d="M430 398l95 55v35l-95-55z" fill="#959592"/>
          <path d="M525 453l102-31v35l-102 31z" fill="url(#gF2)"/>
          <path d="M627 422l119 69-21 23-98-57z" fill="url(#gF3)"/>
          <path d="M692 549l98 57v35l-98-57z" fill="#959592"/>
          <path d="M790 606l251-292v35L790 641z" fill="#a3a39f"/>
          <path d="M716 394l165-49-45 48-79 24z" fill="url(#gHole)"/>
          <path fill-rule="evenodd" d="M937 253l104 61-251 292-98-57 54-58-119-69-102 31-95-55zM716 394l78 45 87-94z" fill="#d7d7d5"/>
        </g>
      </svg>
      <svg class="triad" width="50" height="60" viewBox="282 582 50 60" role="img" aria-label="Ejes X Y Z">
        <path d="M295.500 619v-14" stroke="#0000a8"/><path d="M296 618l12-6" stroke="#0a9a0a"/><path d="M296 619l13 7" stroke="#b01010"/>
        <path d="M290 604l5.500-10 5.500 10q-5.500 3-11 0z" fill="#0000a0"/>
        <path d="M306 605l11 1-6 9-5-3z" fill="#008f00"/><path d="M306 627l5-6 7 9-11 2z" fill="#b00808"/>
        <text x="292" y="593" fill="#3a3af0">Z</text><text x="318" y="607" fill="#36e236">Y</text><text x="318" y="637" fill="#f03636">X</text>
      </svg>
      <div class="doc-buttons">
        <button aria-label="Minimizar documento"><svg viewBox="0 0 16 16"><path d="M4 9.500h10" stroke="#fff" stroke-width="3"/></svg></button>
        <button aria-label="Restaurar documento"><svg viewBox="0 0 16 16"><path d="M5 6h5v6H5zM7 4h5v6" fill="none" stroke="#fff" stroke-width="1.800"/></svg></button>
        <button aria-label="Cerrar documento"><svg viewBox="0 0 16 16"><path d="M5 5l8 8M13 5l-8 8" stroke="#fff" stroke-width="2.600"/></svg></button>
      </div>
      <svg class="cube" width="54" height="58" viewBox="0 0 54 58" role="img" aria-label="ViewCube">
        <path d="M1 13L27 1l25 12-25 14z" fill="#898f9b"/><path d="M1 13l26 14v30L3 44z" fill="#8b909b"/><path d="M52 13L27 27v30l24-14z" fill="#7d838e"/>
        <path d="M1 13L27 1l25 12-1 30-24 14L3 44zM1 13l26 14 25-14M27 27v30" fill="none" stroke="#697079"/>
        <circle cx="27" cy="27" r="5" fill="#767d8a" opacity=".6"/>
        <g class="cube-text"><text transform="translate(15 9) rotate(24)">POSTERIOR</text><text transform="translate(4 29) rotate(28)">SUPERIOR</text><text transform="translate(41 46) rotate(-88)">DERECHA</text></g>
      </svg>
      <div class="navbar">
        <button class="nav-x" aria-label="Cerrar barra"><svg viewBox="0 0 10 10"><circle cx="5" cy="5" r="4.500" fill="#4c535f"/><path d="M3 3l4 4M7 3L3 7" stroke="#bbb"/></svg></button>
        <button class="nav-main" aria-label="Rueda de navegación"><svg viewBox="0 0 24 24"><path d="M12 2h8q2 0 2 2v8a10 10 0 1 1-10-10z" fill="#b2b6be" stroke="#555c68"/><circle cx="12" cy="12" r="5.500" fill="#b9bdc5" stroke="#555c68"/><path d="M8 16l-3 3M16 16l3 3" stroke="#555c68"/></svg></button>
        <span class="nav-caret"></span>
        <span class="nav-line"></span>
        <button class="nav-btn" aria-label="Encuadre"><svg viewBox="0 0 16 16"><path d="M4 10L1 7l1-1 3 2-2-5 1-1 2 4-.500-5H7l1 5 1-5h1.500L10 7l2-4 1 .5-1 5c1 3 0 5-2 7H6z" fill="#c6c9cf" stroke="#606774" stroke-width=".6"/></svg></button>
        <button class="nav-btn" aria-label="Zoom"><svg viewBox="0 0 16 16"><path d="M10 10l5 5" stroke="#595f69" stroke-width="3"/><circle cx="6.500" cy="6.500" r="5.500" fill="#c4c7ce" stroke="#606774"/><path d="M4 4h5v5H4z" fill="#a2a8b4" stroke="#555c68"/></svg></button>
        <span class="nav-caret"></span>
        <button class="nav-btn" aria-label="Órbita"><svg viewBox="0 0 16 16"><ellipse cx="8" cy="8" rx="3" ry="7" fill="none" stroke="#5d6471"/><ellipse cx="8" cy="8" rx="7" ry="3" fill="none" stroke="#5d6471"/><path d="M8 6v4M6 8h4" stroke="#5d6471"/></svg></button>
        <span class="nav-caret"></span>
        <button class="nav-btn" aria-label="Mirar a"><svg viewBox="0 0 16 16"><path d="M1 6h14v9H1z" fill="#b5b9c1" stroke="#5a616d"/><path d="M4 8.500h8v4H4z" fill="#8e95a1" stroke="#5a616d"/><path d="M3 5l5-4v2l4-2" fill="none" stroke="#5a616d"/></svg></button>
        <button class="nav-x low" aria-label="Opciones de barra"><svg viewBox="0 0 10 10"><circle cx="5" cy="5" r="4.500" fill="#4c535f"/><path d="M3 3.500h4M3 5h4L5 7.500z" stroke="#bbb" fill="#bbb" stroke-width=".6"/></svg></button>
      </div>
    </div>
    <div class="doc-tabs">
      <button class="arr" aria-label="Cascada"><svg viewBox="0 0 18 18"><path d="M11 4V1.500H1.500v5H4M14 7V4.500H4.500v5H7M7.500 9.500h9v6h-9z" fill="none" stroke="#ddd"/></svg></button>
      <button class="arr" aria-label="Mosaico"><svg viewBox="0 0 18 18"><path d="M1.500 1.500h6v5h-6zM9.500 1.500h6v5h-6zM1.500 10.500h6v5h-6zM9.500 10.500h6v5h-6z" fill="none" stroke="#ddd"/></svg></button>
      <button class="arr" aria-label="Mosaico horizontal"><svg viewBox="0 0 18 18"><path d="M1.500 1.500h15v5h-15zM1.500 10.500h15v5h-15z" fill="none" stroke="#ddd"/></svg></button>
      <button class="arr" aria-label="Mosaico vertical"><svg viewBox="0 0 18 18"><path d="M1.500 1.500h5v14h-5zM10.500 1.500h5v14h-5z" fill="none" stroke="#ddd"/></svg></button>
      <button class="arr" aria-label="Lista de documentos"><svg viewBox="0 0 18 18"><path d="M4 13h10L9 5z" fill="#ddd"/></svg></button>
      <button class="doc-tab">Mi página de inic...</button>
      <button class="doc-tab current">A.ipt<svg width="10" height="10" viewBox="0 0 10 10"><path d="M1 1l8 8M9 1L1 9" stroke="#444" stroke-width="2"/></svg></button>
    </div>
  </div>
</main>

<footer class="status">
  <span class="status-text">Listo</span>
  <span class="status-cell wide">1</span>
  <span class="status-cell">1</span>
  <span class="status-grip"><svg width="9" height="9" viewBox="0 0 9 9"><path d="M7 1h2v2H7zM4 4h2v2H4zM7 4h2v2H7zM1 7h2v2H1zM4 7h2v2H4zM7 7h2v2H7z" fill="#b5b5b5"/></svg></span>
</footer>
</div>
<div class="backdrop-right"><span class="thumb"></span></div>
</div>
</body>
</html>
```

FILE: styles.css
```css
* { box-sizing: border-box; }
body {
  margin: 0;
  height: 100vh;
  display: flex;
  flex-direction: column;
  overflow: hidden;
  background: #fafafa;
  font: 11px/15px "Noto Sans", "Open Sans", sans-serif;
  color: #333;
}
button, input, select {
  font: inherit;
  color: inherit;
  background: none;
  border: 0;
  padding: 0;
  margin: 0;
}
button { display: flex; align-items: center; justify-content: center; white-space: nowrap; }
svg { flex: none; display: block; }
.defs { position: absolute; width: 0; height: 0; }

.backdrop-top { flex: none; height: 5px; background: #e8ebee; display: flex; justify-content: center; }
.backdrop-tab { width: 142px; margin-right: 72px; background: #fff; border-radius: 5px 5px 0 0; }
.desk { flex: 1; min-height: 0; display: flex; }
.backdrop-left { width: 5px; background: linear-gradient(#e8ebee 29px, #fff 29px, #fff 97px, #ddd 97px, #ddd 98px, #fafafa 98px); }
.backdrop-right { width: 5px; padding-top: 115px; background: linear-gradient(#e8ebee 29px, #fff 29px, #fff 97px, #f1f1f1 97px); }
.thumb { display: block; margin-left: 1px; height: 165px; background: #c6c6c6; }

.app {
  flex: 1;
  min-width: 0;
  display: flex;
  flex-direction: column;
  background: #505050;
  border: solid #505050;
  border-width: 0 4px 1px;
}

/* Title bar */
.titlebar { flex: none; height: 30px; display: flex; align-items: center; color: #ddd; }
.logo { width: 23px; margin-right: 6px; flex-direction: column; color: #d87a2a; }
.logo svg { width: 12px; height: 16px; }
.logo-text { font-size: 7px; line-height: 7px; }
.tb { flex: none; width: 24px; height: 24px; }
.tb svg { width: 16px; height: 16px; }
.tb.slim { width: 16px; }
.tb-arrow { flex: none; width: 12px; height: 24px; }
.tb-arrow::before, .sq-arrow::before, .caret {
  content: "";
  border: 3px solid transparent;
  border-top-color: #ddd;
  border-bottom: 0;
}
.tb-arrow.dim::before { border-top-color: #999; }
.fx { font: italic 17px/20px "Liberation Serif", serif; color: #111; }
.fx sub { font-size: 11px; line-height: 11px; font-weight: bold; align-self: flex-end; }
.picker { position: relative; flex: none; width: 100px; height: 22px; background: #929292; display: flex; align-items: center; }
.picker select { appearance: none; width: 100%; padding: 0 16px 0 7px; font-size: 12px; color: #505050; }
.picker::after {
  content: "";
  position: absolute;
  right: 2px;
  top: 9px;
  border: 4px solid transparent;
  border-top: 5px solid #444;
  border-bottom: 0;
}
.picker .ball { margin-left: 4px; }
.picker.with-ball select { padding: 0 12px 0 3px; }
.doc-title { flex: 1; margin: 0; text-align: center; font-size: 12px; font-weight: normal; }
.tb-right { width: 14px; height: 24px; }
.tb-right::before { content: ""; border: 4px solid transparent; border-left-color: #ddd; border-right: 0; }
.search { flex: none; width: 180px; height: 19px; padding: 0 5px; background: #929292; color: #e0e0e0; }
.user { width: 84px; }
.cart { margin-left: 2px; }
.tb-sep { width: 1px; height: 18px; margin: 0 4px 0 5px; background: #7a7a7a; }
.help span { width: 15px; height: 15px; border-radius: 50%; background: #f0f0f0; color: #2446a8; font-weight: bold; font-size: 12px; }
.window-buttons { display: flex; margin-left: 18px; }

/* Ribbon tabs */
.tabs { flex: none; height: 20px; display: flex; gap: 1px; }
.tab { padding: 0 10px 2px; color: #d0d0d0; }
.tab.file { width: 58px; margin-right: 2px; background: #f08528; color: #fff; }
.tab.active { padding: 0 10px 2px 9px; background: #f5f5f5; color: #555; }
.tabs .tb, .tabs .tb-arrow { height: 20px; }
.collapse { margin-left: 14px; }

/* Ribbon */
.ribbon { flex: none; height: 94px; display: flex; background: #f5f5f5; overflow: hidden; }
.panel { flex: none; display: flex; flex-direction: column; padding-top: 4px; border-right: 1px solid #dcdcdc; }
.tools { height: 72px; display: flex; }
.tools.center { justify-content: center; }
.panel-name { height: 18px; line-height: 18px; text-align: center; white-space: nowrap; }
.panel-name.menu::after {
  content: "";
  display: inline-block;
  margin-left: 6px;
  border: 4px solid transparent;
  border-top: 5px solid #444;
  border-bottom: 0;
  vertical-align: middle;
}
.p-sketch { width: 81px; }
.p-create { width: 373px; }
.p-modify { width: 231px; }
.p-explore { width: 66px; }
.p-work { width: 133px; }
.p-pattern { width: 55px; }
.p-free { width: 100px; }
.p-surface { width: 80px; }
.p-sim { width: 70px; }
.p-convert { width: 76px; }
.p-more { border: 0; }
.p-create .tools { padding-left: 4px; }
.p-modify .tools { padding-left: 2px; }
.p-work .tools { padding-left: 23px; }
.p-pattern .tools, .p-surface .tools { padding-left: 3px; }
.p-free .tools { padding-left: 12px; }
.p-more .tools { padding-left: 3px; }

.big { position: relative; height: 72px; flex-direction: column; justify-content: flex-start; }
.big svg { width: 32px; height: 32px; margin: 2px 0 3px; }
.p-sketch .big { width: 80px; }
.w-36 { width: 36px; }
.w-48 { width: 48px; }
.w-50 { width: 50px; }
.w-54 { width: 54px; }
.w-68 { width: 68px; }
.drop::after, .drop-side::after {
  content: "";
  margin-top: 2px;
  border: 3px solid transparent;
  border-top-color: #333;
  border-bottom: 0;
}
.drop-side::after { position: absolute; right: 5px; top: 50px; }

.list { display: flex; flex-direction: column; gap: 2px; align-items: flex-start; }
.cmd { height: 22px; gap: 5px; padding-bottom: 1px; }
.cmd svg, .sq svg, .more svg { width: 16px; height: 16px; }
.cmd.inset { padding-left: 4px; }
.col-a { width: 89px; margin-left: 3px; }
.col-b { width: 81px; }
.col-d { width: 72px; margin-left: 3px; }

.grid { display: grid; gap: 2px 1px; grid-auto-rows: 22px; align-content: start; }
.g1 { grid-template-columns: auto; margin-left: 2px; }
.g2 { grid-template-columns: 24px 24px; }
.g3 { grid-template-columns: 24px 24px 24px; }
.sq, .sq-arrow, .more { height: 22px; border: 1px solid #ccc; background: #fafafa; }
.sq { width: 24px; }
.split { display: flex; }
.sq-arrow { width: 13px; margin-left: -1px; }
.sq-arrow::before, .caret { border-top-color: #444; }
.more { width: 35px; gap: 6px; }

/* Model browser */
.work { flex: 1; min-height: 0; display: flex; gap: 4px; }
.browser { flex: none; width: 230px; background: #fff; color: #000; }
.browser-head { height: 24px; display: flex; background: #5e5e5e; }
.browser-tab { width: 79px; gap: 11px; justify-content: flex-start; padding-left: 6px; background: #f8f8f8; color: #555; }
.head-btn { width: 22px; height: 24px; }
.head-btn svg { width: 16px; height: 16px; }
.head-btn.push { margin-left: auto; }
.tree { margin: 0; padding: 2px 0 0; list-style: none; font: 11px/20px "DejaVu Sans Condensed", "Noto Sans", sans-serif; }
.tree li { height: 20px; display: flex; align-items: center; gap: 2px; }
.tree svg { width: 16px; height: 16px; }
.root { padding-left: 3px; }
.node { position: relative; padding-left: 19px; }
.node::before {
  content: "";
  position: absolute;
  left: 9px;
  top: 0;
  width: 9px;
  height: 10px;
  border: dotted #aaa;
  border-width: 0 0 1px 1px;
}
.node::after {
  content: "";
  position: absolute;
  left: 4px;
  top: 6px;
  width: 7px;
  height: 7px;
  background: #fff;
  border: solid #999;
  border-width: 2px 2px 0 0;
  transform: rotate(45deg);
}
.node.last::after { display: none; }

/* 3D viewport */
.stage-col { flex: 1; min-width: 0; display: flex; flex-direction: column; }
.stage {
  position: relative;
  flex: 1;
  min-height: 0;
  overflow: hidden;
  background: linear-gradient(#8493af 0, #929eb5 22%, #9ea8bd 48%, #9ba4b7 68%, #a5aab6 78%, #b7b9bf 89%, #c7c8cb 100%);
}
.stage::before {
  content: "";
  position: absolute;
  inset: 0;
  background: linear-gradient(90deg, rgba(50, 57, 70, .95) 0, rgba(54, 63, 78, .68) 8%, rgba(58, 70, 90, .38) 18%, rgba(70, 85, 110, .12) 28%, rgba(80, 95, 120, 0) 38%, rgba(80, 95, 120, 0) 62%, rgba(70, 85, 110, .12) 72%, rgba(58, 70, 90, .38) 82%, rgba(54, 63, 78, .68) 92%, rgba(50, 57, 70, .95) 100%);
  mask-image: linear-gradient(#000 0, rgba(0, 0, 0, .8) 35%, rgba(0, 0, 0, .56) 58%, rgba(0, 0, 0, .22) 74%, rgba(0, 0, 0, .08) 86%, rgba(0, 0, 0, .02) 100%);
}
.model { position: relative; width: 100%; height: 100%; }
.triad { position: absolute; left: 39px; bottom: 29px; }
.triad text { font: 11px "Noto Sans", sans-serif; }
.doc-buttons { position: absolute; top: 3px; right: 0; display: flex; gap: 4px; }
.doc-buttons svg { width: 16px; height: 16px; }
.cube { position: absolute; top: 42px; right: 18px; }
.cube-text { font: bold 5px "Noto Sans", sans-serif; fill: #5d646f; }
.navbar {
  position: absolute;
  top: 113px;
  right: 1px;
  width: 34px;
  height: 199px;
  padding: 1px 0 2px;
  display: flex;
  flex-direction: column;
  align-items: center;
  background: #7f8590;
  border: 2px solid #4a5261;
  border-radius: 6px;
}
.nav-x { align-self: flex-end; margin-right: 2px; }
.nav-x svg { width: 9px; height: 9px; }
.nav-x.low { margin-top: auto; }
.nav-main { margin-top: 9px; }
.nav-main svg { width: 24px; height: 24px; }
.nav-caret { flex: none; margin: 8px 0 7px; border: 3px solid transparent; border-top-color: #555c68; border-bottom: 0; }
.nav-line { flex: none; width: 26px; height: 1px; margin: -3px 0 7px; background: #5d6470; }
.nav-btn svg { width: 16px; height: 16px; }
.nav-btn + .nav-btn { margin-top: 8px; }

/* Document tabs */
.doc-tabs { flex: none; height: 24px; display: flex; background: #5e5e5e; }
.arr { width: 24px; }
.arr svg { width: 18px; height: 18px; }
.doc-tab { padding: 0 8px; width: 120px; justify-content: flex-start; border-left: 1px solid #999; color: #ddd; }
.doc-tab.current { width: 61px; padding: 0 7px; gap: 7px; background: #f5f5f5; color: #555; border-right: 1px solid #999; }

/* Status bar */
.status { flex: none; height: 24px; display: flex; align-items: center; background: #f5f5f5; color: #000; }
.status-text { flex: 1; padding-left: 1px; }
.status-cell, .status-grip { width: 38px; height: 21px; line-height: 21px; padding-left: 8px; border-left: 1px solid #d5d5d5; }
.status-cell.wide { width: 40px; padding-left: 10px; }
.status-grip { width: 20px; display: flex; align-items: flex-end; padding-left: 9px; }
```
